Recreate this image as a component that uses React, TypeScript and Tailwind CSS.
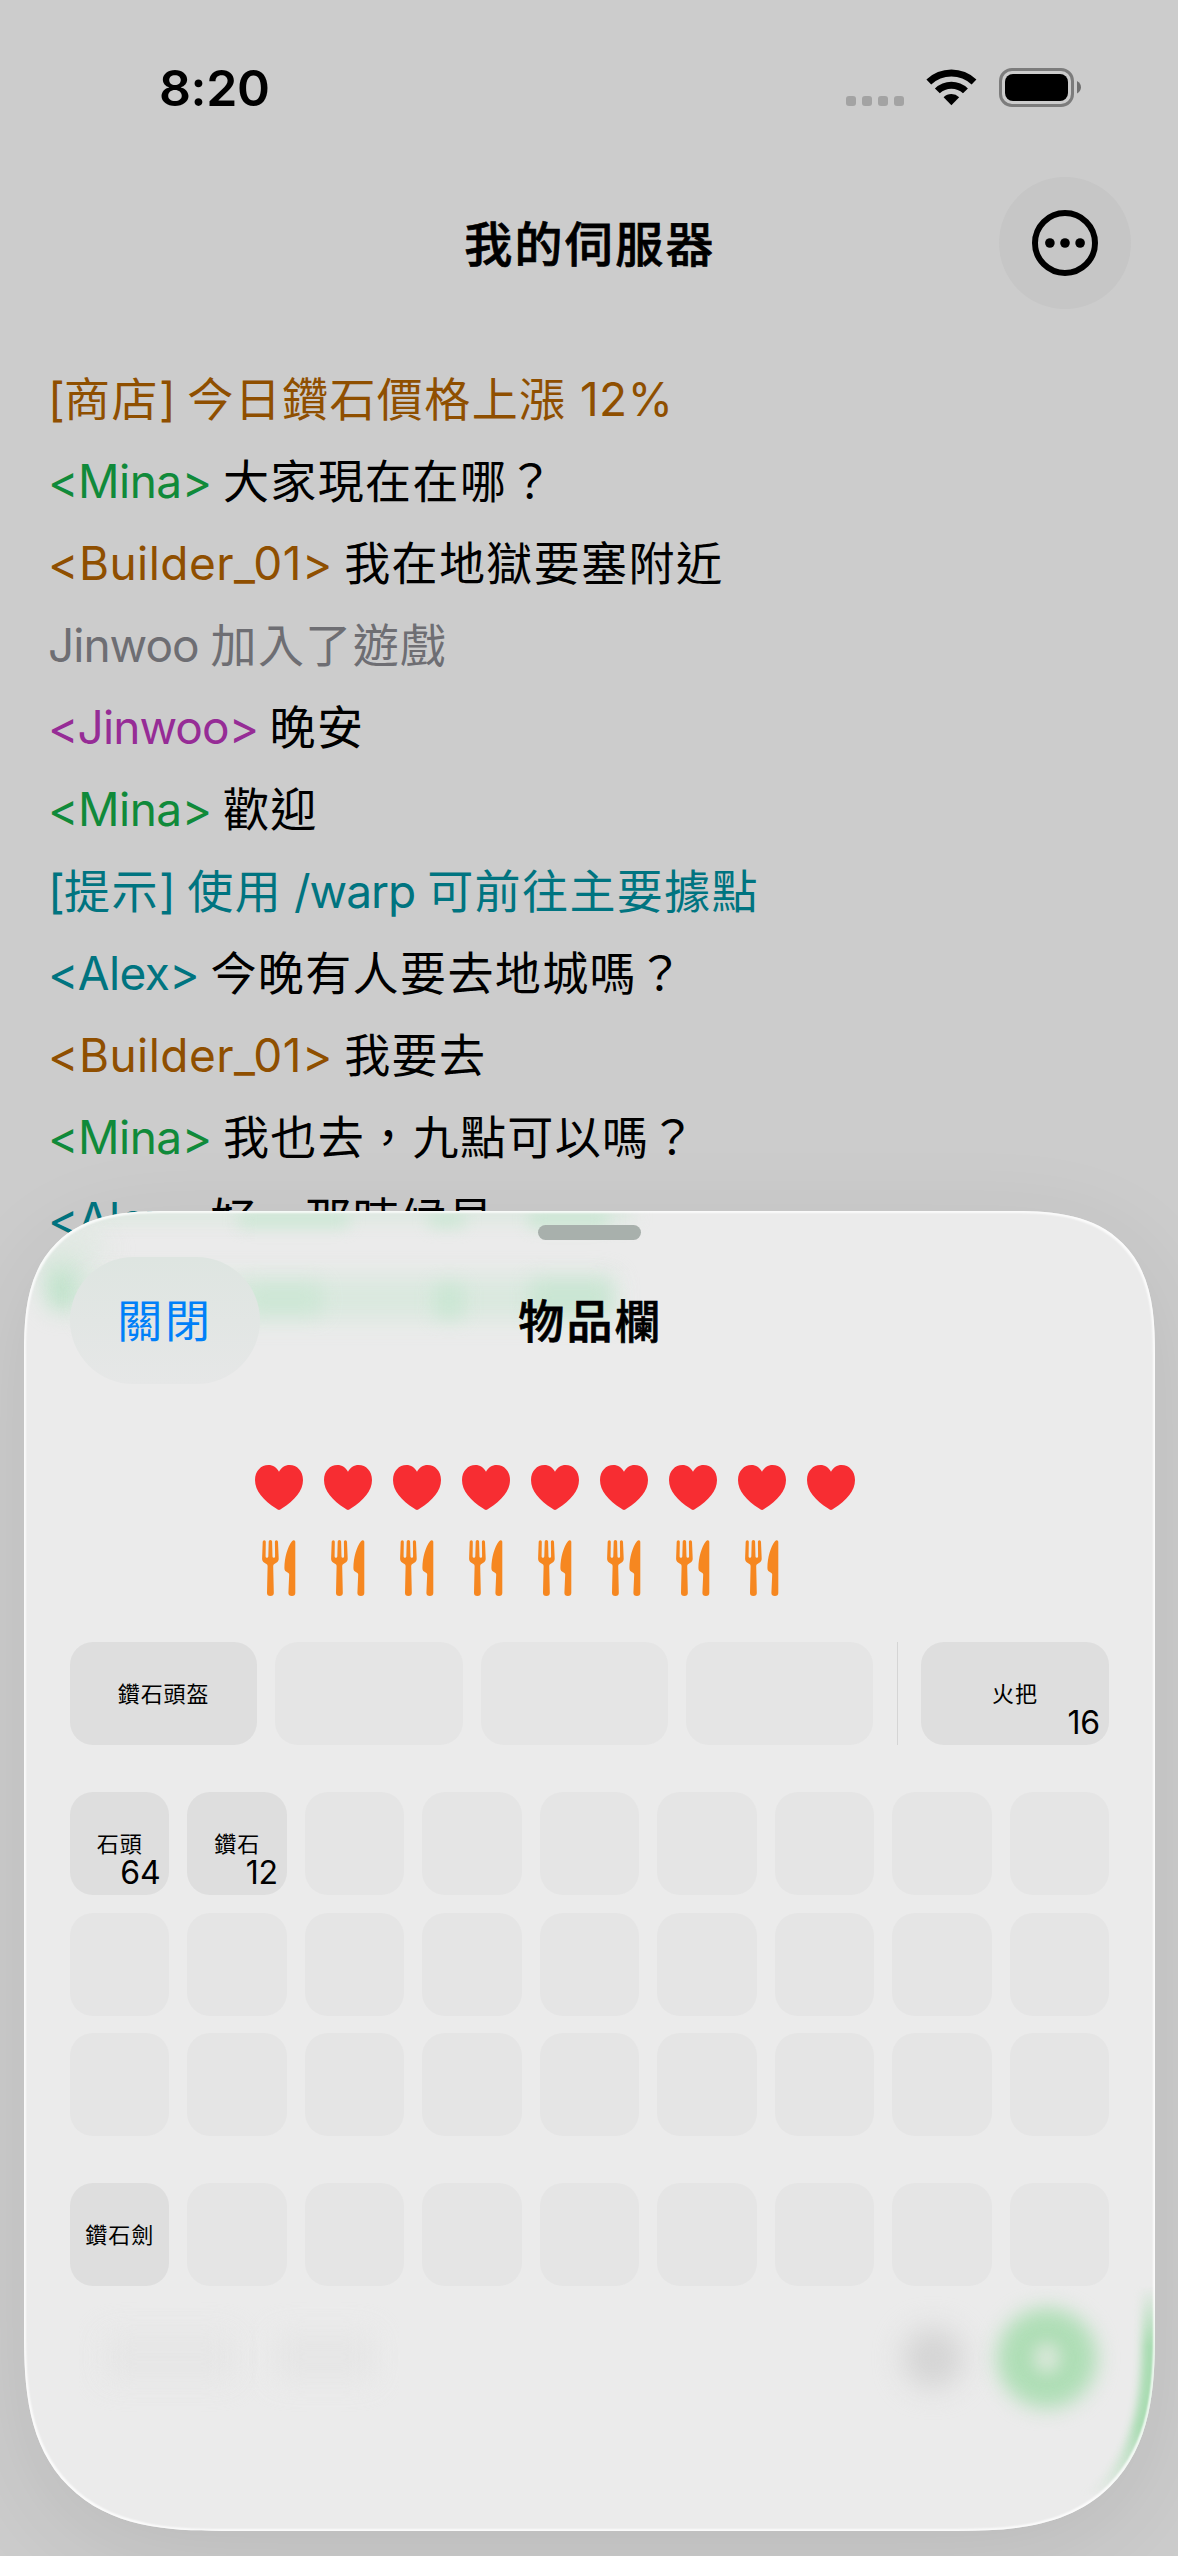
import type { ReactNode } from 'react';

type Line = { name?: string; nameClass?: string; color: string; body: string };

const chat: Line[] = [
  { color: 'text-[#8f4f00]', body: '[商店] 今日鑽石價格上漲 12%' },
  { name: '<Mina>', nameClass: 'tracking-[-0.5px]', color: 'text-[#108a3a]', body: '大家現在在哪？' },
  { name: '<Builder_01>', nameClass: 'tracking-[0.45px]', color: 'text-[#8f4f00]', body: '我在地獄要塞附近' },
  { color: 'text-[#6e6e73]', body: 'Jinwoo 加入了遊戲' },
  { name: '<Jinwoo>', nameClass: 'tracking-[-0.9px]', color: 'text-[#962c96]', body: '晚安' },
  { name: '<Mina>', nameClass: 'tracking-[-0.5px]', color: 'text-[#108a3a]', body: '歡迎' },
  { color: 'text-[#007480]', body: '[提示] 使用 /warp 可前往主要據點' },
  { name: '<Alex>', nameClass: 'tracking-[-0.6px]', color: 'text-[#007480]', body: '今晚有人要去地城嗎？' },
  { name: '<Builder_01>', nameClass: 'tracking-[0.45px]', color: 'text-[#8f4f00]', body: '我要去' },
  { name: '<Mina>', nameClass: 'tracking-[-0.5px]', color: 'text-[#108a3a]', body: '我也去，九點可以嗎？' },
  { name: '<Alex>', nameClass: 'tracking-[-0.6px]', color: 'text-[#007480]', body: '好，那時候見' },
];

/* Gives Chinese, Latin and numeric runs the tracking each of them needs. */
function Mixed({ children }: { children: string }) {
  const runs = children.match(/[\u3000-\u9fff\uff00-\uffef]+|[^\u3000-\u9fff\uff00-\uffef]+/g) ?? [];
  return (
    <>
      {runs.map((run, i) => {
        if (/[\u3000-\u9fff\uff00-\uffef]/.test(run)) {
          return <span key={i} className="text-[46px] tracking-[1.4px]">{run}</span>;
        }
        if (/[A-Za-z]/.test(run)) return <span key={i} className="tracking-[-1px]">{run}</span>;
        return <span key={i} className={/\d/.test(run) ? 'tracking-[0.5px]' : 'tracking-[-0.7px]'}>{run}</span>;
      })}
    </>
  );
}

function ChatLine({ line }: { line: Line }) {
  return (
    <div className="h-[82px] text-[46px] leading-[82px] whitespace-pre">
      {line.name ? (
        <>
          <span className={`${line.color} ${line.nameClass}`}>{line.name}</span>
          <span className="tracking-[-1.6px]"> </span>
          <Mixed>{line.body}</Mixed>
        </>
      ) : (
        <span className={line.color}>
          <Mixed>{line.body}</Mixed>
        </span>
      )}
    </div>
  );
}

function StatusBar() {
  return (
    <div className="flex h-[177px] items-start justify-between pt-[54px] pr-[96px] pl-[159px]">
      <div className="h-[68px] text-[50px] leading-[68px] font-semibold tracking-[-0.4px]">8:20</div>
      <div className="flex h-[68px] items-start pt-[14px]">
        <div className="mt-[28px] flex gap-[6px]">
          {[0, 1, 2, 3].map((i) => (
            <div key={i} className="size-[10px] rounded-[3px] bg-[#a3a3a3]" />
          ))}
        </div>
        <svg className="ml-[22px] h-[39px] w-[51px]" viewBox="0 0 51 39">
          <path d="M0.4 11.6 A36 36 0 0 1 50.4 11.6 L45.6 16.5 A29.2 29.2 0 0 0 5.2 16.5Z" />
          <path d="M8.9 20.4 A23.8 23.8 0 0 1 41.9 20.4 L37 25.3 A17 17 0 0 0 13.8 25.3Z" />
          <path d="M17.6 29.2 A11.3 11.3 0 0 1 33.2 29.2 L25.4 37.2Z" />
        </svg>
        <svg className="ml-[22px] h-[39px] w-[83px]" viewBox="0 0 83 39">
          <rect x="1.5" y="1.5" width="72" height="36" rx="11.5" fill="none" stroke="#7c7c7c" strokeWidth="3" />
          <rect x="6" y="6" width="63" height="27" rx="8" />
          <path d="M78 13 Q82 15.5 82 19.2 Q82 23 78 25.5Z" fill="#707070" />
        </svg>
      </div>
    </div>
  );
}

function Header() {
  return (
    <div className="grid h-[132px] grid-cols-[132px_1fr_132px] items-center px-[47px]">
      <div />
      <h1 className="pt-[4px] pl-[2px] text-center text-[48px] leading-[60px] font-medium tracking-[2.3px] [-webkit-text-stroke:0.7px_black]">
        我的伺服器
      </h1>
      <div className="flex size-[132px] items-center justify-center rounded-full bg-[#c6c6c6]">
        <svg className="size-[66px]" viewBox="0 0 66 66">
          <circle cx="33" cy="33" r="30" fill="none" stroke="#000" strokeWidth="6" />
          <circle cx="17.9" cy="33" r="4.8" />
          <circle cx="33" cy="33" r="4.8" />
          <circle cx="48.1" cy="33" r="4.8" />
        </svg>
      </div>
    </div>
  );
}

function Heart() {
  return (
    <svg className="h-[45px] w-[48px]" viewBox="0 0 48 45" fill="#f72d32">
      <path d="M24 45 C23.2 45 22.2 44.3 21.2 43.6 C8.5 35.2 0 26 0 15 C0 6 6 0 13.4 0 C18 0 21.8 2.6 24 6.7 C26.2 2.6 30 0 34.6 0 C42 0 48 6 48 15 C48 26 39.5 35.2 26.8 43.6 C25.8 44.3 24.8 45 24 45Z" />
    </svg>
  );
}

function Fork() {
  return (
    <svg className="h-[56px] w-[34px]" viewBox="0 0 34 56" fill="#f68720">
      <path d="M0.7 1.8 Q0.8 0.3 2.3 0.3 Q3.8 0.3 3.8 1.8 L3.6 16.4 Q3.7 17.7 4.9 17.7 Q6.2 17.7 6.3 16.4 L6.7 1.6 Q6.8 0 8.4 0 Q10 0 10.1 1.6 L10.5 16.4 Q10.6 17.7 11.8 17.7 Q13.1 17.7 13.1 16.4 L12.9 1.8 Q12.9 0.3 14.4 0.3 Q15.9 0.3 16 1.8 L16.7 18.6 C16.8 21.6 14.6 22.9 12.4 24 Q11.2 24.7 11.2 26 L11.8 53 Q11.8 56 8.4 56 Q5 56 5 53 L5.6 26 Q5.6 24.7 4.4 24 C2.2 22.9 0 21.6 0.1 18.6Z" />
      <path d="M33.3 2 L33.3 53 Q33.3 56 29.9 56 Q26.4 56 26.4 53 L27.2 34.6 Q27.2 33.4 26 32.8 C23.6 31.5 22.4 30.6 22.4 28 C22.6 17 25.5 7 30 1.2 C31.5 -0.6 33.3 0 33.3 2Z" />
    </svg>
  );
}

function Meter({ count, icon }: { count: number; icon: ReactNode }) {
  return (
    <div className="flex w-[690px]">
      {Array.from({ length: count }, (_, i) => (
        <div key={i} className="flex h-[56px] w-[69px] items-center justify-center">
          {icon}
        </div>
      ))}
    </div>
  );
}

type Item = { name: string; count?: number };

function Slot({ item }: { item?: Item }) {
  if (!item) return <div className="h-[103px] rounded-[23px] bg-[#e5e5e5]" />;
  return (
    <div className="relative flex h-[103px] items-center justify-center rounded-[23px] bg-[#dedede]">
      <span className="text-[22px] leading-[30px] tracking-[0.9px] whitespace-nowrap">{item.name}</span>
      {item.count !== undefined && (
        <span className="absolute right-[9px] bottom-[3px] text-[32px] leading-[38px] tracking-[-0.2px]">{item.count}</span>
      )}
    </div>
  );
}

const storage: (Item | undefined)[] = [
  { name: '石頭', count: 64 },
  { name: '鑽石', count: 12 },
  ...Array.from({ length: 25 }, () => undefined),
];
const hotbar: (Item | undefined)[] = [{ name: '鑽石劍' }, ...Array.from({ length: 8 }, () => undefined)];

/* Colour that shows through the frosted sheet from the screen below it. */
function SheetGlow() {
  return (
    <div className="pointer-events-none absolute inset-0">
      <div className="absolute top-[-8px] left-[60px] h-[20px] w-[550px] bg-[#d3e7d9] opacity-60 blur-[9px]" />
      <div className="absolute top-[2px] left-[215px] h-[14px] w-[110px] bg-[#c0e6cc] opacity-70 blur-[8px]" />
      <div className="absolute top-[2px] left-[405px] h-[14px] w-[36px] bg-[#c0e6cc] opacity-70 blur-[8px]" />
      <div className="absolute top-[2px] left-[505px] h-[14px] w-[80px] bg-[#c0e6cc] opacity-80 blur-[8px]" />
      <div className="absolute top-[46px] left-[22px] h-[54px] w-[34px] rounded-full bg-[#bde3c9] blur-[11px]" />
      <div className="absolute top-[10px] left-[24px] h-[60px] w-[50px] rotate-45 bg-[#dce8df] opacity-60 blur-[12px]" />
      <div className="absolute top-[66px] left-[60px] h-[42px] w-[530px] bg-[#d5e8db] opacity-80 blur-[12px]" />
      <div className="absolute top-[72px] left-[222px] h-[32px] w-[76px] bg-[#c6e6d0] opacity-65 blur-[10px]" />
      <div className="absolute top-[72px] left-[410px] h-[36px] w-[30px] bg-[#c6e6d0] opacity-75 blur-[9px]" />
      <div className="absolute top-[68px] left-[506px] h-[38px] w-[82px] bg-[#c4e5cf] opacity-75 blur-[10px]" />

      <div className="absolute top-[1122px] left-[80px] h-[48px] w-[130px] bg-[#e5e5e5] opacity-80 blur-[14px]" />
      <div className="absolute top-[1122px] left-[250px] h-[48px] w-[100px] bg-[#e5e5e5] opacity-80 blur-[14px]" />
      <div className="absolute top-[1117px] left-[879px] size-[60px] rounded-full bg-[#d4d4d4] blur-[14px]" />
      <div className="absolute top-[1097px] left-[973px] size-[100px] rounded-full bg-[#afdeb6] blur-[10px]" />
      <div className="absolute top-[1132px] left-[1010px] h-[30px] w-[26px] rounded-full bg-[#d8e7d8] blur-[8px]" />
    </div>
  );
}

function InventorySheet() {
  return (
    <section className="absolute top-[1211px] left-[24px] h-[1320px] w-[1131px] rounded-t-[110px] rounded-b-[152px] bg-[#ebebeb] shadow-[0_24px_100px_rgba(0,0,0,0.085)] supports-[corner-shape:squircle]:rounded-t-[143px] supports-[corner-shape:squircle]:rounded-b-[198px] [corner-shape:superellipse(1.44)]">
      <div className="absolute inset-0 overflow-hidden rounded-[inherit] [corner-shape:inherit]">
        <SheetGlow />
      </div>
      <div className="absolute inset-0 rounded-[inherit] shadow-[inset_-14px_0_9px_-1px_#a9dcb2] [corner-shape:inherit] [mask-image:linear-gradient(to_bottom,transparent_1075px,black_1135px,black_1215px,transparent_1285px)]" />
      <div className="absolute inset-0 rounded-[inherit] shadow-[inset_0_0_2px_2px_rgba(255,255,255,0.8)] [corner-shape:inherit]" />

      <div className="relative flex h-full flex-col px-[46px] pt-[14px]">
        <div className="h-[15px] w-[103px] self-center rounded-full bg-[#a8b0ac]" />
        <div className="mt-[17px] grid h-[127px] grid-cols-[190px_1fr_190px] items-center">
          <button className="h-[127px] rounded-full bg-linear-to-b from-[#dee5e1] to-[#e6e7e7] pt-[2px] text-[45px] tracking-[2.8px] text-[#0080f8]">
            關閉
          </button>
          <h2 className="pt-[2px] pl-[2px] text-center text-[46px] font-medium tracking-[2.2px] [-webkit-text-stroke:0.7px_black]">
            物品欄
          </h2>
        </div>

        <div className="mt-[75px] flex flex-col items-center gap-[25px]">
          <Meter count={9} icon={<Heart />} />
          <Meter count={8} icon={<Fork />} />
        </div>

        <div className="mt-[46px] flex">
          <div className="grid w-[803px] grid-cols-4 gap-[18px]">
            <Slot item={{ name: '鑽石頭盔' }} />
            <Slot />
            <Slot />
            <Slot />
          </div>
          <div className="mx-[23.5px] w-px bg-[#d5d5d5]" />
          <div className="flex-1">
            <Slot item={{ name: '火把', count: 16 }} />
          </div>
        </div>

        <div className="mt-[47px] grid grid-cols-9 gap-x-[18px] gap-y-[17.5px]">
          {storage.map((item, i) => (
            <Slot key={i} item={item} />
          ))}
        </div>
        <div className="mt-[47px] grid grid-cols-9 gap-x-[18px]">
          {hotbar.map((item, i) => (
            <Slot key={i} item={item} />
          ))}
        </div>
      </div>
    </section>
  );
}

export default function App() {
  return (
    <main className="relative h-[2556px] w-[1178px] overflow-hidden bg-[#cccccc] font-[Inter,'Noto_Sans_CJK_TC',sans-serif] text-black" lang="zh-Hant">
      <StatusBar />
      <Header />
      <div className="mt-[49px] pl-[48px]">
        {chat.map((line, i) => (
          <ChatLine key={i} line={line} />
        ))}
      </div>
      <InventorySheet />
    </main>
  );
}
